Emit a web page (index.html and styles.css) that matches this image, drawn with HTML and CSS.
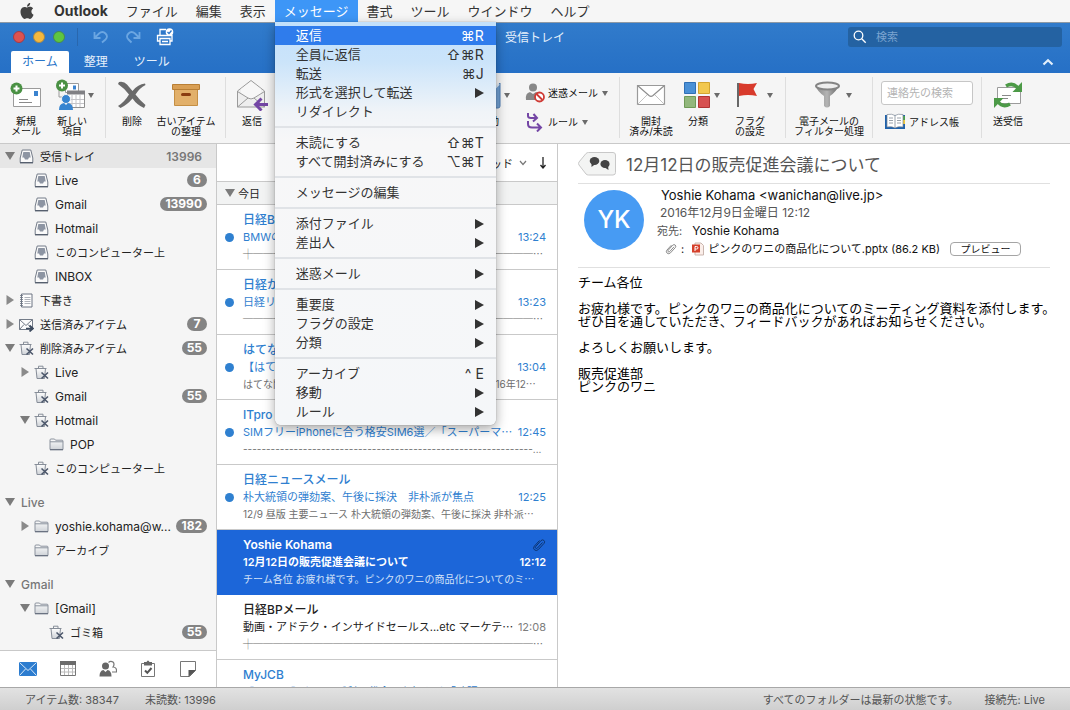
FILE: index.html
```html
<!DOCTYPE html>
<html lang="ja">
<head>
  <meta charset="UTF-8">
  <meta name="viewport" content="width=device-width, initial-scale=1">
  <title>受信トレイ - Outlook</title>
  <link rel="stylesheet" href="styles.css">
</head>
<body>
  <!-- Shared icons -->
  <svg class="sprite" aria-hidden="true">
    <defs>
      <linearGradient id="silver" x1="0" y1="0" x2="0" y2="1">
        <stop offset="0" stop-color="#fdfdfd"/><stop offset="1" stop-color="#cfd3d8"/>
      </linearGradient>
      <linearGradient id="metal" x1="0" y1="0" x2="1" y2="0">
        <stop offset="0" stop-color="#8a8a8a"/><stop offset=".5" stop-color="#b4b4b4"/><stop offset="1" stop-color="#6c6c6c"/>
      </linearGradient>
    </defs>
    <symbol id="i-inbox" viewBox="0 0 15 15">
      <path d="M3.2 1h8.6l2 8v4.5H1.2V9z" fill="#fafafa" stroke="#737b88"/>
      <path d="M4.3 3h6.4l1 5.600H10L9 10.500H6L5 8.600H3.300z" fill="#8d95a3"/>
      <path d="M1 13.800h13" stroke="#4f5968" stroke-width="1.200"/>
    </symbol>
    <symbol id="i-notebook" viewBox="0 0 15 15">
      <path d="M2.500 1h10.500v13H2.500z" fill="#fdfdfd" stroke="#6d7583"/>
      <path d="M1 2.500h3M1 4.500h3M1 6.500h3M1 8.500h3M1 10.500h3M1 12.500h3" stroke="#6d7583" stroke-width=".8"/>
      <path d="M5.500 4.500h6M5.500 6.500h6M5.500 8.500h6M5.500 10.500h6" stroke="#9a9fa8" stroke-width=".8"/>
    </symbol>
    <symbol id="i-sent" viewBox="0 0 15 15">
      <path d="M.5 2.500h13v10H.5z" fill="#fdfdfd" stroke="#737b88"/>
      <path d="M.5 2.500l6.500 6 6.500-6M.5 12.500l4.500-5M13.500 12.500L9 7.500" fill="none" stroke="#737b88"/>
      <path d="M7 11.500h6M10.500 8.500l3.500 3-3.500 3" fill="none" stroke="#3c4a5e" stroke-width="1.700"/>
    </symbol>
    <symbol id="i-trash" viewBox="0 0 15 15">
      <path d="M2 3.500h9.500l-1 10h-7.500z" fill="url(#silver)" stroke="#868d98"/>
      <path d="M.5 3.500h12M4.500 3V1.200h4.500V3" fill="none" stroke="#868d98"/>
      <path d="M7.500 7.500l6.500 6M14 7.500l-6.500 6" stroke="#4b566a" stroke-width="1.600"/>
    </symbol>
    <symbol id="i-folder" viewBox="0 0 15 15">
      <path d="M1 12.500V3q0-1 1-1h3.500l1 1.200H13q1 0 1 1v8.300z" fill="url(#silver)" stroke="#8b929d"/>
      <path d="M1 4.800h13" stroke="#8b929d"/>
      <path d="M1 12.800h13" stroke="#5d6675"/>
    </symbol>
    <symbol id="i-clip" viewBox="0 0 14 14">
      <path d="M10.500 4.500L5.500 10q-1 1-1.800.2t.1-1.800L9 2.600q1.500-1.400 2.900-.2t.2 2.900l-5.700 6.200q-2 1.900-3.900.4t-.2-3.700L7.500 2.500" fill="none" stroke="currentColor"/>
    </symbol>
    <symbol id="i-envelope" viewBox="0 0 30 22">
      <path d="M1.500 1.500h27v19h-27z" fill="#fff" stroke="#9a9a9a" stroke-width="1.200"/>
      <path d="M1.500 20.500L12 10M28.500 20.500L18 10" stroke="#c4c4c4" fill="none"/>
      <path d="M1.500 1.500L13 11.500q2 1.600 4 0L28.500 1.500" fill="none" stroke="#8f8f8f" stroke-width="1.200"/>
    </symbol>
  </svg>

  <!-- System menu bar -->
  <header class="menubar">
    <button class="apple" aria-label="Apple">
      <svg width="16" height="16" viewBox="0 0 24 24" fill="#444"><path d="M12.152 6.896c-.948 0-2.415-1.078-3.960-1.040-2.040.027-3.910 1.183-4.961 3.014-2.117 3.675-.546 9.103 1.519 12.090 1.013 1.454 2.208 3.090 3.792 3.039 1.520-.065 2.090-.987 3.935-.987 1.831 0 2.350.987 3.960.948 1.637-.026 2.676-1.480 3.676-2.948 1.156-1.688 1.636-3.325 1.662-3.415-.039-.013-3.182-1.221-3.220-4.857-.026-3.040 2.480-4.494 2.597-4.559-1.429-2.090-3.623-2.324-4.390-2.376-2-.156-3.675 1.090-4.610 1.090zM15.530 3.830c.843-1.012 1.400-2.427 1.245-3.830-1.207.052-2.662.805-3.532 1.818-.780.896-1.454 2.338-1.273 3.714 1.338.104 2.715-.688 3.559-1.701"/></svg>
    </button>
    <button class="menu-title app-name">Outlook</button>
    <button class="menu-title">ファイル</button>
    <button class="menu-title">編集</button>
    <button class="menu-title">表示</button>
    <div class="menu-wrap">
      <button class="menu-title open">メッセージ</button>
      <div class="menu" role="menu">
        <button class="menu-item active">返信<kbd>⌘R</kbd></button>
        <button class="menu-item">全員に返信<kbd>⇧⌘R</kbd></button>
        <button class="menu-item">転送<kbd>⌘J</kbd></button>
        <button class="menu-item">形式を選択して転送<i class="arrow"></i></button>
        <button class="menu-item">リダイレクト</button>
        <hr>
        <button class="menu-item">未読にする<kbd>⇧⌘T</kbd></button>
        <button class="menu-item">すべて開封済みにする<kbd>⌥⌘T</kbd></button>
        <hr>
        <button class="menu-item">メッセージの編集</button>
        <hr>
        <button class="menu-item">添付ファイル<i class="arrow"></i></button>
        <button class="menu-item">差出人<i class="arrow"></i></button>
        <hr>
        <button class="menu-item">迷惑メール<i class="arrow"></i></button>
        <hr>
        <button class="menu-item">重要度<i class="arrow"></i></button>
        <button class="menu-item">フラグの設定<i class="arrow"></i></button>
        <button class="menu-item">分類<i class="arrow"></i></button>
        <hr>
        <button class="menu-item">アーカイブ<kbd>^ E</kbd></button>
        <button class="menu-item">移動<i class="arrow"></i></button>
        <button class="menu-item">ルール<i class="arrow"></i></button>
      </div>
    </div>
    <button class="menu-title">書式</button>
    <button class="menu-title">ツール</button>
    <button class="menu-title">ウインドウ</button>
    <button class="menu-title">ヘルプ</button>
  </header>

  <!-- Window title and tabs -->
  <div class="titlebar">
    <div class="title-left">
      <button class="light red" aria-label="閉じる"></button>
      <button class="light yellow" aria-label="しまう"></button>
      <button class="light green" aria-label="拡大"></button>
      <div class="quick">
        <button aria-label="元に戻す"><svg width="18" height="18" viewBox="0 0 18 18" fill="none" stroke="#6ba6e2" stroke-width="1.800"><path d="M2.500 4v6h6M3 9.500l4-4q3.500-3 6.500 0t0 6l-3.500 3"/></svg></button>
        <button aria-label="やり直し"><svg width="18" height="18" viewBox="0 0 18 18" fill="none" stroke="#6ba6e2" stroke-width="1.800"><path d="M15.500 4v6h-6M15 9.500l-4-4q-3.500-3-6.500 0t0 6l3 3"/></svg></button>
        <button aria-label="印刷"><svg width="18" height="18" viewBox="0 0 18 18" fill="none" stroke="#fff" stroke-width="1.300"><path d="M4 7V1.500h6M4 13H1.500V7.500H16V13h-2M4 10.500h10v6H4zM6 13.500h6"/><circle cx="13.500" cy="4" r="3.800" fill="#fff" stroke="none"/><path d="M11.500 4l1.500 1.500 2.500-3" stroke="#2d76c8"/></svg></button>
      </div>
    </div>
    <h1>受信トレイ</h1>
    <label class="search">
      <svg width="14" height="14" viewBox="0 0 14 14" fill="none" stroke="#fff" stroke-width="1.300"><circle cx="5.500" cy="5.500" r="4.300"/><path d="M8.700 8.700l4 4"/></svg>
      <input type="text" placeholder="検索" aria-label="検索">
    </label>
  </div>
  <nav class="tabs">
    <a href="#" class="tab current">ホーム</a>
    <a href="#" class="tab">整理</a>
    <a href="#" class="tab">ツール</a>
    <button class="collapse" aria-label="リボンを折りたたむ"><svg width="12" height="8" viewBox="0 0 12 8" fill="none" stroke="#e3effb" stroke-width="2.200"><path d="M1.500 6.500L6 2.300l4.500 4.200"/></svg></button>
  </nav>

  <!-- Ribbon -->
  <div class="ribbon">
    <div class="group new-group">
      <button class="tool w-mail">
        <span class="tool-icon"><svg width="32" height="28" viewBox="0 0 32 28"><path d="M3.500 7.500h27v18h-27z" fill="#fff" stroke="#9b9b9b"/><path d="M24 10h4v5h-4z" fill="#3b83cf"/><path d="M9 18.500h9M9 21.500h13" stroke="#8a8a8a"/><circle cx="6.500" cy="7.500" r="6" fill="#4a9144"/><path d="M6.500 4.500v6M3.500 7.500h6" stroke="#fff" stroke-width="2"/></svg></span>
        新規<br>メール
      </button>
      <button class="tool w-item">
        <span class="tool-icon"><svg width="32" height="32" viewBox="0 0 32 32"><path d="M9.500 4.500h13v9h-13z" fill="#fff" stroke="#9b9b9b"/><path d="M17 6.500h3v4h-3z" fill="#3b83cf"/><path d="M3 10v8h4" stroke="#999" fill="none"/><path d="M11.500 13.500h17v15h-17z" fill="#fff" stroke="#8f8f8f"/><path d="M11 11.500h18v4H11z" fill="#808084"/><path d="M16 16v12M20 16v12M24 16v12M12 20.500h16M12 24.500h16" stroke="#c4c4c8"/><circle cx="10" cy="20" r="4.500" fill="#3684d0" stroke="#f5f5f5"/><path d="M3 31q0-6.500 5-7l2 2 2-2q5 .5 5 7z" fill="#3684d0"/><circle cx="6" cy="6.500" r="6" fill="#4a9144"/><path d="M6 3.500v6M3 6.500h6" stroke="#fff" stroke-width="2"/></svg><i class="caret"></i></span>
        新しい<br>項目
      </button>
    </div>
    <div class="group delete-group">
      <button class="tool w-delete">
        <span class="tool-icon"><svg width="30" height="28" viewBox="0 0 30 28"><path d="M2 1q5-1 8 2.500L15.500 10Q21 3 28 2.500l.5 1.500q-6 3-10 9.500 5 6.500 10 10.500l-1.500 3q-7-3-11.500-9.500Q10 24 3.500 27L1 25q6.500-4 11-11.500Q7 7 1 3z" fill="#6a6a6a"/></svg></span>
        削除
      </button>
      <button class="tool w-archive">
        <span class="tool-icon"><svg width="30" height="26" viewBox="0 0 30 26"><path d="M3.500 7.500h23v16h-23z" fill="#e2b06a" stroke="#c58f44"/><path d="M1.500 2.500h27v5h-27z" fill="#d99f54" stroke="#b97f35"/><rect x="10" y="11" width="10" height="3" rx="1.500" fill="#8a3d10"/></svg></span>
        古いアイテム<br>の整理
      </button>
    </div>
    <div class="group">
      <button class="tool w-reply">
        <span class="tool-icon"><svg width="32" height="32" viewBox="0 0 32 32"><path d="M1.500 12L15 1.500 28.500 12v16h-27z" fill="#eee" stroke="#9a9a9a"/><path d="M5 10l10-7.500L25 10v5l-10 6-10-6z" fill="#f7f7f7"/><path d="M1.500 12.500L12 19q3 2 6 0l10.500-6.500M1.500 28L12 19M28.500 28L18 19" fill="none" stroke="#9a9a9a"/><path d="M32 25.500H20M25.500 19.500l-6 6 6 6" fill="none" stroke="#7446a5" stroke-width="3"/></svg></span>
        返信
      </button>
      <button class="tool w-reply-all">
        <span class="tool-icon"><svg width="30" height="22"><use href="#i-envelope"/></svg></span>
        全員に返信
      </button>
      <button class="tool w-forward">
        <span class="tool-icon"><svg width="30" height="22"><use href="#i-envelope"/></svg></span>
        転送
      </button>
    </div>
    <div class="group move-group">
      <button class="tool w-move">
        <span class="tool-icon"><svg width="24" height="28" viewBox="0 0 24 28"><path d="M2 8h15l6-6v23q0 2-2 2H2z" fill="#6f9fd2" stroke="#4f7fb5"/><path d="M17 8l5-5" stroke="#dbe8f5" stroke-width="2"/></svg><i class="caret"></i></span>
        移動
      </button>
      <div class="stack">
        <button class="small-tool"><svg width="20" height="20" viewBox="0 0 20 20"><circle cx="8" cy="4.500" r="4" fill="#888"/><path d="M1 17q-1-7 4-8l3 2 3-2q3 .5 4 3l-2 5z" fill="#888"/><circle cx="14.500" cy="14" r="4.500" fill="#fff" stroke="#cf3b35" stroke-width="1.800"/><path d="M11.500 11l6 6" stroke="#cf3b35" stroke-width="1.800"/></svg>迷惑メール<i class="caret"></i></button>
        <button class="small-tool"><svg width="20" height="20" viewBox="0 0 20 20" fill="none" stroke="#7446a5" stroke-width="2"><path d="M3 1v3q0 2 3 2h5M8.500 2L12 6l-4 3.500M3 9v3q0 3.500 4 3.500h8M12 11.500l4 4-4 4"/></svg>ルール<i class="caret"></i></button>
      </div>
    </div>
    <div class="group tag-group">
      <button class="tool w-read">
        <span class="tool-icon"><svg width="30" height="22"><use href="#i-envelope"/></svg></span>
        開封<br>済み/未読
      </button>
      <button class="tool w-category">
        <span class="tool-icon"><svg width="28" height="28" viewBox="0 0 28 28"><path d="M1.500 1.500h11v11h-11z" fill="#4a90d6" stroke="#2f6fb5"/><path d="M15.500 1.500h11v11h-11z" fill="#f2c84e" stroke="#d3a52f"/><path d="M1.500 15.500h11v11h-11z" fill="#92b77c" stroke="#6f9a57"/><path d="M15.500 15.500h11v11h-11z" fill="#d75050" stroke="#b03434"/></svg><i class="caret"></i></span>
        分類
      </button>
      <button class="tool w-flag">
        <span class="tool-icon"><svg width="28" height="28" viewBox="0 0 28 28"><path d="M2 2v24" stroke="#444" stroke-width="1.600"/><path d="M3 2q9 2 18 0l-3.500 6L21 15q-9-2-18 0z" fill="#d83a2c"/></svg><i class="caret"></i></span>
        フラグ<br>の設定
      </button>
    </div>
    <div class="group filter-group">
      <button class="tool w-filter">
        <span class="tool-icon"><svg width="28" height="28" viewBox="2 0 28 28"><path d="M3 5q1 5 8 10v10q3 3 6 0V15q7-5 8-10z" fill="url(#metal)"/><ellipse cx="14.500" cy="5" rx="11.500" ry="3.500" fill="#eee" stroke="#848484" stroke-width="2"/></svg><i class="caret"></i></span>
        電子メールの<br>フィルター処理
      </button>
    </div>
    <div class="group contacts-group">
      <div class="stack">
        <input class="contact-search" type="text" placeholder="連絡先の検索" aria-label="連絡先の検索">
        <button class="small-tool address"><svg width="20" height="18" viewBox="0 0 20 18"><path d="M0 2h20v14H0z" fill="#1f62ac"/><path d="M18 3h2v4h-2z" fill="#4aa04a"/><path d="M18 7h2v4h-2z" fill="#f0c93c"/><path d="M2 1.500q5-1 8 1 3-2 8-1V14q-5-1-8 1-3-2-8-1z" fill="#fff" stroke="#7c8794" stroke-width=".7"/><path d="M10 2.500V15M4 5h4M4 7.500h4M4 10h4M12 5h4M12 7.500h4M12 10h4" stroke="#9aa2ab"/></svg>アドレス帳</button>
      </div>
    </div>
    <div class="group last">
      <button class="tool w-sync">
        <span class="tool-icon"><svg width="30" height="28" viewBox="0 0 30 28"><path d="M4.500 6.500h23v16h-23z" fill="#fff" stroke="#9b9b9b"/><path d="M9 14.500h9M9 17.500h6" stroke="#8a8a8a"/><path d="M13 5q7-4 12 2" fill="none" stroke="#4c9a47" stroke-width="3.500"/><path d="M29 1v10h-9.500z" fill="#4c9a47"/><path d="M17 23q-7 4-12-2" fill="none" stroke="#4c9a47" stroke-width="3.500"/><path d="M1 27V17h9.500z" fill="#4c9a47"/></svg></span>
        送受信
      </button>
    </div>
  </div>

  <main class="panes">
    <!-- Folder list -->
    <aside class="sidebar">
      <ul class="folders">
        <li class="folder ja selected"><i class="tri down"></i><svg><use href="#i-inbox"/></svg><span>受信トレイ</span><b class="count">13996</b></li>
        <li class="folder l1"><i class="tri"></i><svg><use href="#i-inbox"/></svg><span>Live</span><b class="badge">6</b></li>
        <li class="folder l1"><i class="tri"></i><svg><use href="#i-inbox"/></svg><span>Gmail</span><b class="badge">13990</b></li>
        <li class="folder l1"><i class="tri"></i><svg><use href="#i-inbox"/></svg><span>Hotmail</span></li>
        <li class="folder l1 ja"><i class="tri"></i><svg><use href="#i-inbox"/></svg><span>このコンピューター上</span></li>
        <li class="folder l1"><i class="tri"></i><svg><use href="#i-inbox"/></svg><span>INBOX</span></li>
        <li class="folder ja"><i class="tri right"></i><svg><use href="#i-notebook"/></svg><span>下書き</span></li>
        <li class="folder ja"><i class="tri right"></i><svg><use href="#i-sent"/></svg><span>送信済みアイテム</span><b class="badge">7</b></li>
        <li class="folder ja"><i class="tri down"></i><svg><use href="#i-trash"/></svg><span>削除済みアイテム</span><b class="badge">55</b></li>
        <li class="folder l1"><i class="tri right"></i><svg><use href="#i-trash"/></svg><span>Live</span></li>
        <li class="folder l1"><i class="tri"></i><svg><use href="#i-trash"/></svg><span>Gmail</span><b class="badge">55</b></li>
        <li class="folder l1"><i class="tri down"></i><svg><use href="#i-trash"/></svg><span>Hotmail</span></li>
        <li class="folder l2"><i class="tri"></i><svg><use href="#i-folder"/></svg><span>POP</span></li>
        <li class="folder l1 ja"><i class="tri"></i><svg><use href="#i-trash"/></svg><span>このコンピューター上</span></li>
        <li class="folder account"><i class="tri down"></i><span>Live</span></li>
        <li class="folder l1"><i class="tri right"></i><svg><use href="#i-folder"/></svg><span>yoshie.kohama@w...</span><b class="badge">182</b></li>
        <li class="folder l1 ja"><i class="tri"></i><svg><use href="#i-folder"/></svg><span>アーカイブ</span></li>
        <li class="folder account"><i class="tri down"></i><span>Gmail</span></li>
        <li class="folder l1"><i class="tri down"></i><svg><use href="#i-folder"/></svg><span>[Gmail]</span></li>
        <li class="folder l2 ja"><i class="tri"></i><svg><use href="#i-trash"/></svg><span>ゴミ箱</span><b class="badge">55</b></li>
        <li class="folder l2"><i class="tri"></i><svg><use href="#i-folder"/></svg></li>
      </ul>
      <nav class="switcher">
        <button aria-label="メール"><svg width="18" height="16" viewBox="0 0 18 16"><path d="M0 1h18v14H0z" fill="#2c7ccf"/><path d="M.5 1.500L9 9.500l8.500-8M.5 14.500l6-6.500M17.500 14.500l-6-6.500" fill="none" stroke="#d8e8f8"/></svg></button>
        <button aria-label="予定表"><svg width="18" height="16" viewBox="0 0 18 16"><path d="M1.500 1.500h15v13h-15z" fill="#fff" stroke="#777"/><path d="M1 0h16v4H1z" fill="#6b6b6b"/><path d="M5.500 4v10M9.500 4v10M13.500 4v10M2 7.500h14M2 11h14" stroke="#bbb"/></svg></button>
        <button aria-label="連絡先"><svg width="18" height="18" viewBox="0 0 18 18"><circle cx="6.500" cy="6" r="3.500" fill="#666"/><path d="M.5 16.500q0-6 4-6.500l2 2 2-2q4 .5 4 6.500z" fill="#666"/><path d="M9.500 2.500q2-2 4.500-.5 2 2 0 5 4 0 3.500 5H13" fill="none" stroke="#777" stroke-width="1.200"/></svg></button>
        <button aria-label="タスク"><svg width="16" height="18" viewBox="0 0 16 18"><path d="M1.500 3.500h13v13h-13z" fill="#fff" stroke="#777"/><path d="M4 2h2.500q1.500-3 3 0H12v3.500H4z" fill="#666"/><path d="M5 10.500l2.300 2.300L11.500 8" fill="none" stroke="#555" stroke-width="2"/></svg></button>
        <button aria-label="メモ"><svg width="18" height="18" viewBox="0 0 18 18"><path d="M1.500 1.500h15v9l-6 6h-9z" fill="#fff" stroke="#777"/><path d="M9.500 17v-7H17z" fill="#555"/></svg></button>
      </nav>
    </aside>

    <!-- Message list -->
    <section class="messages">
      <div class="sort-bar">
        <button>スレッド</button>
        <svg width="8" height="6" viewBox="0 0 8 6" fill="none" stroke="#777" stroke-width="1.200"><path d="M1 1l3 3.500L7 1"/></svg>
        <button class="order" aria-label="並べ替え順序"><svg width="8" height="12" viewBox="0 0 8 12" fill="none" stroke="#222" stroke-width="1.300"><path d="M4 0v11M1.500 8L4 11l2.500-3"/></svg></button>
      </div>
      <h2 class="day"><i class="tri down"></i>今日</h2>
      <article class="message unread">
        <h3>日経BPメール</h3>
        <p class="subject"><span>BMWの新型車、都市部での販売体制を強化へ⋯</span><time>13:24</time></p>
        <p class="preview">┼────────────────────────────⋯</p>
      </article>
      <article class="message unread">
        <h3>日経からのお知らせ</h3>
        <p class="subject"><span>日経リサーチからのアンケートご協力のお願い冬⋯</span><time>13:23</time></p>
        <p class="preview">─────────────────────────────⋯</p>
      </article>
      <article class="message unread">
        <h3>はてなブックマーク</h3>
        <p class="subject"><span>【はてなブックマーク】今日の人気エントリー集⋯</span><time>13:04</time></p>
        <p class="preview">はてな関連の新着人気エントリーをまたお届けします2016年12⋯</p>
      </article>
      <article class="message unread">
        <h3>ITpro</h3>
        <p class="subject"><span>SIMフリーiPhoneに合う格安SIM6選／「スーパーマ⋯</span><time>12:45</time></p>
        <p class="preview">---------------------------------------------------------------...</p>
      </article>
      <article class="message unread">
        <h3>日経ニュースメール</h3>
        <p class="subject"><span>朴大統領の弾劾案、午後に採決　非朴派が焦点</span><time>12:25</time></p>
        <p class="preview">12/9 昼版 主要ニュース 朴大統領の弾劾案、午後に採決 非朴派⋯</p>
      </article>
      <article class="message selected">
        <h3>Yoshie Kohama<svg width="14" height="14"><use href="#i-clip"/></svg></h3>
        <p class="subject"><span>12月12日の販売促進会議について</span><time>12:12</time></p>
        <p class="preview">チーム各位 お疲れ様です。ピンクのワニの商品化についてのミ⋯</p>
      </article>
      <article class="message">
        <h3>日経BPメール</h3>
        <p class="subject"><span>動画・アドテク・インサイドセールス...etc マーケテ⋯</span><time>12:08</time></p>
        <p class="preview">┼────────────────────────────⋯</p>
      </article>
      <article class="message unread">
        <h3>MyJCB</h3>
        <p class="subject"><span>【MyJCB】カードご利用代金のお知らせ「確認」</span><time>12:01</time></p>
      </article>
    </section>

    <!-- Reading pane -->
    <section class="reading">
      <div class="thread">
        <svg width="38" height="24" viewBox="0 0 38 24"><path d="M10.500.5H35q2.500 0 2.500 2.500v17.500q0 2.500-2.500 2.500H10.500Q9 23 8 22L1 13q-1-1.500 0-3L8 1.500q1-1 2.500-1z" fill="#f3f4f3" stroke="#c8c8c8"/><ellipse cx="16.500" cy="9" rx="4.800" ry="4" fill="#444"/><path d="M13.500 11l0 4 4-3z" fill="#444"/><ellipse cx="27" cy="12" rx="4.600" ry="4" fill="#444"/><path d="M26 15l4.500 3-.5-5z" fill="#444"/></svg>
        <h2>12月12日の販売促進会議について</h2>
      </div>
      <div class="envelope">
        <div class="avatar">YK</div>
        <div class="details">
          <p class="from">Yoshie Kohama &lt;wanichan@live.jp&gt;</p>
          <p class="date">2016年12月9日金曜日 12:12</p>
          <p class="to"><span>宛先:</span>Yoshie Kohama</p>
          <p class="attachment">
            <svg class="clip" width="12" height="14"><use href="#i-clip"/></svg><span>:</span>
            <svg width="12" height="14" viewBox="0 0 12 14"><path d="M3 1h6l2.500 2.500V13H3z" fill="#fbeee9" stroke="#c9b5ae"/><path d="M0 2.500h8v8H0z" fill="#d5402b"/><path d="M3 9V4.500h1.500q1.500 0 1.500 1.300T4.500 7H3" fill="none" stroke="#fff"/></svg>
            ピンクのワニの商品化について.pptx (86.2 KB)
            <button>プレビュー</button>
          </p>
        </div>
      </div>
      <div class="body">
        <p>チーム各位</p>
        <p>お疲れ様です。ピンクのワニの商品化についてのミーティング資料を添付します。<br>ぜひ目を通していただき、フィードバックがあればお知らせください。</p>
        <p>よろしくお願いします。</p>
        <p>販売促進部<br>ピンクのワニ</p>
      </div>
    </section>
  </main>

  <footer class="status">
    <span>アイテム数: 38347</span>
    <span>未読数: 13996</span>
    <span class="sync">すべてのフォルダーは最新の状態です。</span>
    <span>接続先: Live</span>
  </footer>
</body>
</html>
```
FILE: styles.css
```css
* {
  margin: 0;
  padding: 0;
  box-sizing: border-box;
}
body {
  display: flex;
  flex-direction: column;
  height: 100vh;
  overflow: hidden;
  font-family: Inter, "Noto Sans CJK JP", sans-serif;
  font-size: 11px;
  color: #222;
  background: #fff;
  white-space: nowrap;
}
button {
  border: none;
  background: none;
  font: inherit;
  color: inherit;
  white-space: nowrap;
}
svg {
  display: block;
  flex: none;
}
ul {
  list-style: none;
}
a {
  text-decoration: none;
}
.sprite {
  position: absolute;
  width: 0;
  height: 0;
}

/* System menu bar */
.menubar {
  display: flex;
  flex: none;
  height: 22px;
  padding-left: 19px;
  background: #f6f6f6;
  font-size: 13px;
  color: #333;
}
.apple {
  width: 26px;
}
.menu-title {
  height: 22px;
  padding: 0 9px;
  line-height: 22px;
}
.app-name {
  font-size: 14px;
  font-weight: 700;
}
.menu-title.open {
  background: #3d96f7;
  color: #fff;
}
.menu-wrap {
  position: relative;
}
.menu {
  position: absolute;
  z-index: 10;
  top: 22px;
  left: 0;
  width: 221px;
  padding: 4px 0;
  border-radius: 0 0 6px 6px;
  background: linear-gradient(#c2e0fb 0, #cbe4fa 40px, #f0f4f8 90px, #f7f7f8 120px, #f5f7f9 100%);
  box-shadow: 0 4px 12px rgba(0,0,0,0.35), 0 0 1px rgba(0,0,0,0.5);
}
.menu-item {
  display: flex;
  justify-content: space-between;
  align-items: center;
  width: 100%;
  height: 19px;
  padding: 0 12px 0 21px;
  line-height: 19px;
}
.menu-item.active {
  background: #2f7cec;
  color: #fff;
}
.menu-item kbd {
  font-family: Inter, "DejaVu Sans", sans-serif;
  font-size: 14px;
}
.menu hr {
  height: 2px;
  margin: 5px 0;
  border: none;
  background: #e0e3e7;
}
.arrow {
  border: 5px solid transparent;
  border-left: 9px solid #333;
  border-right: none;
}

/* Title bar */
.titlebar {
  display: grid;
  flex: none;
  grid-template-columns: 1fr auto 1fr;
  align-items: center;
  height: 28px;
  padding: 0 8px;
  border-top: 1px solid #8d99a5;
  background: linear-gradient(#317bcb, #2b75c8);
  color: #e6f0fb;
}
.title-left {
  display: flex;
  align-items: center;
  gap: 8px;
  padding-left: 5px;
}
.light {
  width: 12px;
  height: 12px;
  border: 1px solid #444;
  border-radius: 50%;
}
.red {
  background: #dd5350;
  border-color: #a33a48;
}
.yellow {
  background: #f5b83d;
  border-color: #a58649;
}
.green {
  background: #5ec63f;
  border-color: #468a50;
}
.quick {
  display: flex;
  gap: 14px;
  margin-left: 4px;
  padding-left: 14px;
  border-left: 1px solid #2967ae;
}
.titlebar h1 {
  font-size: 12px;
  font-weight: 400;
}
.search {
  display: flex;
  align-items: center;
  justify-self: end;
  gap: 9px;
  width: 214px;
  height: 20px;
  padding: 0 5px;
  border-radius: 3px;
  background: #2462a2;
}
.search input {
  flex: 1;
  min-width: 0;
  border: none;
  outline: none;
  background: none;
  font: inherit;
  color: #fff;
}
.search input::placeholder {
  color: #7ba4d0;
}

/* Tabs */
.tabs {
  display: flex;
  flex: none;
  align-items: flex-end;
  gap: 4px;
  height: 23px;
  padding: 0 16px 0 11px;
  background: linear-gradient(#2b75c8, #2670c6);
  font-size: 12px;
}
.tab {
  height: 22px;
  padding: 0 11px;
  border-radius: 2px 2px 0 0;
  line-height: 22px;
  color: #e6f0fb;
}
.tab.current {
  background: #fff;
  color: #2a76c9;
}
.collapse {
  margin-left: auto;
  align-self: center;
}

/* Ribbon */
.ribbon {
  display: flex;
  flex: none;
  height: 71px;
  padding: 4px 0 5px;
  border-bottom: 1px solid #c9c9c9;
  background: #f5f5f5;
  font-size: 10px;
  line-height: 10px;
  color: #111;
}
.group {
  display: flex;
  padding: 0 2px;
  border-right: 1px solid #dedede;
}
.group.last {
  padding: 0;
  border-right: none;
}
.new-group {
  padding: 0 9px 0 4px;
}
.delete-group {
  padding: 0 5px 0 6px;
}
.move-group {
  padding: 0 11px 0 40px;
}
.tag-group {
  padding: 0 5px 0 6px;
}
.filter-group {
  padding: 0 4px;
}
.contacts-group {
  padding: 0 8px;
}
.tool {
  align-self: flex-start;
  text-align: center;
}
.tool-icon {
  display: grid;
  grid-template-columns: 1fr auto 1fr;
  align-items: center;
  height: 36px;
  margin-bottom: 3px;
}
.tool-icon svg {
  grid-column: 2;
}
.caret {
  border: 3px solid transparent;
  border-top: 5px solid #6b6b6b;
  border-bottom: none;
}
.tool .caret {
  justify-self: start;
  margin-left: 3px;
}
.w-mail, .w-category {
  width: 44px;
}
.w-item, .w-reply {
  width: 48px;
}
.w-item .caret {
  margin-left: 0;
}
.w-delete {
  width: 40px;
}
.w-archive {
  width: 68px;
}
.w-reply-all {
  width: 80px;
}
.w-forward, .w-move {
  width: 60px;
}
.w-read {
  width: 50px;
}
.w-flag {
  width: 60px;
}
.w-filter {
  width: 78px;
}
.w-sync {
  width: 52px;
}
.stack {
  display: flex;
  flex-direction: column;
  justify-content: space-between;
  padding: 4px 0;
}
.move-group .stack {
  padding: 4px 0 4px 6px;
}
.small-tool {
  display: flex;
  align-items: center;
  gap: 3px;
  height: 24px;
}
.small-tool .caret {
  margin-left: 1px;
}
.small-tool.address {
  gap: 4px;
  padding-left: 4px;
}
.contact-search {
  width: 92px;
  height: 24px;
  padding: 0 5px;
  border: 1px solid #c6c6c6;
  border-radius: 3px;
  background: #fff;
  font: inherit;
  font-size: 11px;
}
.contact-search::placeholder {
  color: #b3b3b3;
}

/* Panes */
.panes {
  display: flex;
  flex: 1;
  min-height: 0;
}
.tri {
  flex: none;
  width: 10px;
  height: 10px;
}
.tri.down {
  background: #7b7b7b;
  clip-path: polygon(0 10%, 100% 10%, 50% 90%);
}
.tri.right {
  background: #8a8a8a;
  clip-path: polygon(15% 0, 90% 50%, 15% 100%);
}

/* Folder list */
.sidebar {
  display: flex;
  flex: none;
  flex-direction: column;
  width: 217px;
  border-right: 1px solid #c9c9c9;
  background: #f5f5f5;
}
.folders {
  flex: 1;
  min-height: 0;
  overflow: hidden;
}
.folder {
  display: flex;
  align-items: center;
  height: 24px;
  padding: 0 9px 0 5px;
  font-size: 12px;
}
.folder.ja {
  font-size: 11px;
}
.folder.selected {
  background: #e6e6e6;
}
.folder svg {
  width: 15px;
  height: 15px;
  margin: 0 6px 0 4px;
}
.folder.l1 {
  padding-left: 20px;
}
.folder.l2 {
  padding-left: 35px;
}
.folder.account {
  margin-top: 10px;
  font-weight: 500;
  color: #777;
}
.folder.account span {
  margin-left: 6px;
}
.count {
  margin-left: auto;
  padding-right: 5px;
  font-size: 12px;
  font-weight: 600;
  color: #777;
}
.badge {
  min-width: 20px;
  height: 14px;
  margin-left: auto;
  padding: 0 5px;
  border-radius: 7px;
  background: #848484;
  font-size: 12px;
  font-weight: 700;
  line-height: 14px;
  text-align: center;
  color: #fff;
}
.switcher {
  display: flex;
  flex: none;
  height: 37px;
  padding-left: 8px;
  border-top: 1px solid #c9c9c9;
  background: #fff;
}
.switcher button {
  display: flex;
  align-items: center;
  justify-content: center;
  width: 40px;
}

/* Message list */
.messages {
  flex: none;
  width: 341px;
  overflow: hidden;
  border-right: 1px solid #c9c9c9;
}
.sort-bar {
  display: flex;
  align-items: center;
  justify-content: flex-end;
  gap: 6px;
  height: 38px;
  padding-right: 10px;
  border-bottom: 1px solid #c9c9c9;
}
.order {
  margin-left: 6px;
}
.day {
  display: flex;
  align-items: center;
  gap: 3px;
  height: 23px;
  padding-left: 8px;
  border-bottom: 1px solid #c9c9c9;
  background: #f2f3f3;
  font-size: 11px;
  font-weight: 400;
}
.message {
  height: 65px;
  padding: 6px 11px 0 26px;
  border-bottom: 1px solid #c9c9c9;
  overflow: hidden;
}
.message h3 {
  display: flex;
  justify-content: space-between;
  font-size: 12px;
  font-weight: 500;
  line-height: 18px;
}
.subject {
  display: flex;
  align-items: center;
  justify-content: space-between;
  line-height: 17px;
}
.subject time {
  color: #7d7d7d;
}
.preview {
  font-size: 10px;
  line-height: 17px;
  color: #6e6e6e;
}
.unread h3, .unread .subject, .unread time {
  color: #2f80d0;
}
.unread .subject::before {
  content: "";
  width: 9px;
  height: 9px;
  margin: 0 9px 0 -18px;
  border-radius: 50%;
  background: #2f80d0;
}
.unread .subject span {
  flex: 1;
}
.message.selected {
  border-color: #1c66d9;
  background: #1c66d9;
  color: #fff;
}
.selected h3, .selected .subject {
  font-weight: 600;
}
.selected h3 svg {
  margin-top: 2px;
  color: #0d3470;
}
.selected time {
  color: #fff;
}
.selected .preview {
  color: #d3e2f8;
}

/* Reading pane */
.reading {
  flex: 1;
  min-width: 0;
  padding: 0 20px;
}
.thread {
  display: flex;
  align-items: center;
  gap: 10px;
  height: 40px;
  border-bottom: 1px solid #e0e0e0;
}
.thread h2 {
  font-size: 17px;
  font-weight: 400;
  color: #555;
}
.envelope {
  display: flex;
  gap: 13px;
  height: 84px;
  padding: 2px 0 0 6px;
  border-bottom: 1px solid #e0e0e0;
}
.avatar {
  width: 60px;
  height: 60px;
  margin-top: 4px;
  border-radius: 50%;
  background: #479bf3;
  font-size: 24px;
  font-weight: 500;
  line-height: 60px;
  text-align: center;
  color: #fff;
}
.details {
  line-height: 18px;
  color: #111;
}
.from {
  padding-left: 4px;
  font-size: 13px;
}
.date {
  padding-left: 3px;
  font-size: 12px;
  color: #555;
}
.to {
  display: flex;
  gap: 10px;
  font-size: 12px;
}
.to span {
  font-size: 11px;
  color: #555;
}
.attachment {
  display: flex;
  align-items: center;
  gap: 4px;
  padding-left: 8px;
}
.attachment .clip {
  color: #777;
}
.attachment span {
  margin-right: 4px;
}
.attachment button {
  width: 71px;
  height: 14px;
  margin-left: 6px;
  border: 1px solid #a5a5a5;
  border-radius: 4px;
  font-size: 10px;
  line-height: 12px;
}
.body {
  padding-top: 8px;
  font-size: 13px;
  line-height: 13px;
  color: #000;
}
.body p {
  margin-bottom: 13px;
}

/* Status bar */
.status {
  display: flex;
  flex: none;
  align-items: center;
  gap: 26px;
  height: 23px;
  padding: 0 25px;
  border-top: 1px solid #a8a8a8;
  background: linear-gradient(#e2e2e2, #cfcfcf);
  color: #555;
}
.sync {
  margin-left: auto;
}
```
